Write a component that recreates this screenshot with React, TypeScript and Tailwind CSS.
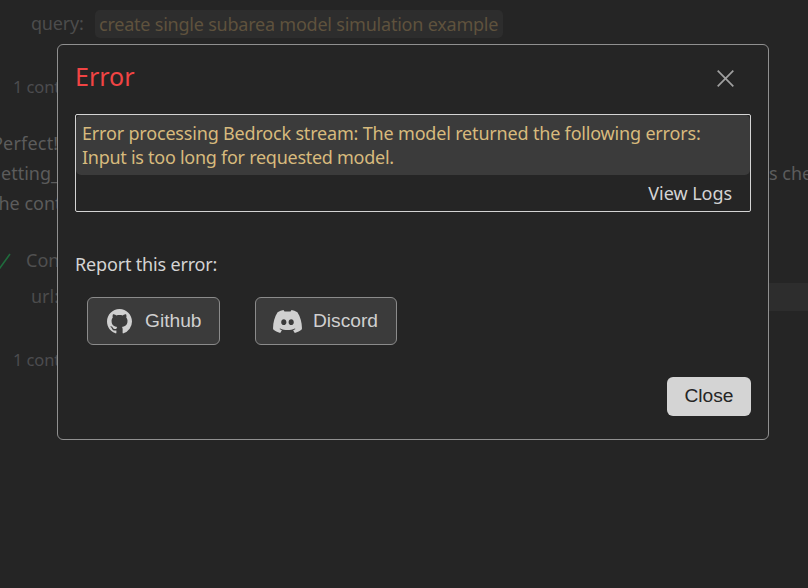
import React from "react";

function Transcript() {
  return (
    <div className="h-full overflow-hidden whitespace-nowrap text-[18px] text-[#5c5c5c]">
      <div className="flex h-[28px] mt-[10px] pl-[31px] text-[#4c4c4c]">
        <span className="w-[64px] leading-[26px] tracking-[-0.2px]">query:</span>
        <span className="h-[28px] w-[408px] rounded-[5px] bg-[#2d2d2d] pl-[4px] leading-[29px] tracking-[-0.22px] text-[#5f523d]">
          create single subarea model simulation example
        </span>
      </div>
      <div className="mt-[35px] h-[28px] pl-[13px] text-[16.5px] leading-[28px] tracking-[-0.1px] text-[#4c4c4f]">1 cont</div>
      <div className="mt-[27px] flex h-[90px] justify-between leading-[30px]">
        <div>
          <div className="-ml-[8px] tracking-[0.2px]">Perfect!</div>
          <div className="pl-[1px]">etting_</div>
          <div className="-ml-[8px]">the cont</div>
        </div>
        <div className="w-[39px] pt-[30px]">s che</div>
      </div>
      <div className="mt-[28px] flex h-[30px] leading-[29px] text-[#505050]">
        <svg className="mt-[7px] h-[18px] w-[26px]" viewBox="0 0 26 18" fill="none" stroke="#1f6b3c" strokeWidth="1.6">
          <path d="M-4 10 L0 15 L10 1" />
        </svg>
        <span>Con</span>
      </div>
      <div className="mt-[7px] flex h-[28px] pl-[31px] leading-[26px] text-[#4c4c4c]">
        <span className="w-[64px]">url:</span>
        <span className="h-[28px] flex-1 bg-[#2d2d2d]" />
      </div>
      <div className="mt-[35px] h-[28px] pl-[13px] text-[16.5px] leading-[28px] tracking-[-0.1px] text-[#4c4c4f]">1 cont</div>
    </div>
  );
}

function GithubIcon({ className }: { className: string }) {
  return (
    <svg viewBox="0 0 16 16" className={className} fill="currentColor">
      <path d="M8 0C3.58 0 0 3.58 0 8c0 3.54 2.29 6.53 5.47 7.59.4.07.55-.17.55-.38 0-.19-.01-.82-.01-1.49-2.01.37-2.53-.49-2.69-.94-.09-.23-.48-.94-.82-1.13-.28-.15-.68-.52-.01-.53.63-.01 1.08.58 1.23.82.72 1.21 1.87.87 2.33.66.07-.52.28-.87.51-1.07-1.78-.2-3.64-.89-3.64-3.95 0-.87.31-1.59.82-2.15-.08-.2-.36-1.02.08-2.12 0 0 .67-.21 2.2.82.64-.18 1.32-.27 2-.27s1.36.09 2 .27c1.53-1.04 2.2-.82 2.2-.82.44 1.1.16 1.92.08 2.12.51.56.82 1.27.82 2.15 0 3.07-1.87 3.75-3.65 3.95.29.25.54.73.54 1.48 0 1.07-.01 1.93-.01 2.2 0 .21.15.46.55.38A8.01 8.01 0 0 0 16 8c0-4.42-3.58-8-8-8z" />
    </svg>
  );
}

function DiscordIcon({ className }: { className: string }) {
  return (
    <svg viewBox="0 0 29 23" className={className} fill="currentColor">
      <path
        fillRule="evenodd"
        d="M4.6 2.2C6.6 1 8.6.3 10.5 0l1 1.6c2-.3 4-.3 6 0l1-1.6c1.9.3 3.9 1 5.9 2.2C27.6 7.3 29.2 13 28.9 19.3c-1.900 1.600-4.300 2.900-7.100 3.700l-1.700-2.700 2.400-1.300-.6-.5c-4.700 2-10.100 2-14.800 0l-.6.5 2.400 1.300L7.200 23C4.400 22.200 2 20.900.1 19.300-.2 13 1.400 7.300 4.600 2.200ZM10.800 9.300c-1.500 0-2.600 1.300-2.600 2.900s1.100 2.900 2.600 2.900 2.600-1.300 2.600-2.900-1.100-2.900-2.600-2.900Zm7.400 0c-1.500 0-2.600 1.300-2.600 2.900s1.100 2.900 2.600 2.900 2.600-1.300 2.600-2.900-1.100-2.900-2.600-2.900Z"
      />
    </svg>
  );
}

function ReportButton({ icon, label, className }: { icon: React.ReactNode; label: string; className: string }) {
  return (
    <button
      className={`flex h-[48px] items-center rounded-[6px] border border-[#8b8b8b] bg-[#3b3b3b] font-['Liberation_Sans',sans-serif] text-[19.2px] text-[#d0d0d0] ${className}`}
    >
      {icon}
      <span>{label}</span>
    </button>
  );
}

function ErrorDialog() {
  return (
    <section
      role="dialog"
      className="absolute left-[57px] top-[44px] flex h-[396px] w-[712px] flex-col rounded-[6px] border border-[#909090] bg-[#252525] px-[17px] text-[18px] text-[#d4d4d4]"
    >
      <header className="flex h-[69px] justify-between">
        <h1 className="pt-[14px] text-[25px] leading-[35px] text-[#f14444]">Error</h1>
        <button aria-label="Dismiss" className="mr-[17px] mt-[25px] h-[17px] w-[17px]">
          <svg viewBox="0 0 17 17" className="h-[17px] w-[17px]" stroke="#a0a0a0" strokeWidth="1.7">
            <path d="M.7.7l15.6 15.6M16.3.7L.7 16.3" />
          </svg>
        </button>
      </header>
      <div className="h-[98px] w-[676px] rounded-[2px] border border-[#d4d4d4]">
        <div className="h-[60px] rounded-[5px] bg-[#3b3b3b] px-[6px] pt-[6px] leading-[24px] text-[#d7ba7d]">
          <p className="tracking-[-0.18px]">Error processing Bedrock stream: The model returned the following errors:</p>
          <p className="tracking-[-0.27px]">Input is too long for requested model.</p>
        </div>
        <div className="flex h-[36px] justify-end pr-[18px] leading-[37px] tracking-[-0.05px]">View Logs</div>
      </div>
      <p className="mt-[38px] h-[28px] leading-[28px] tracking-[-0.17px]">Report this error:</p>
      <div className="mt-[19px] flex gap-[35px] pl-[12px]">
        <ReportButton className="w-[133px] pl-[19px]" label="Github" icon={<GithubIcon className="mr-[13px] h-[25px] w-[25px]" />} />
        <ReportButton className="w-[142px] pl-[17px]" label="Discord" icon={<DiscordIcon className="mr-[11px] h-[23px] w-[29px]" />} />
      </div>
      <button className="mt-[32px] h-[39px] w-[84px] self-end rounded-[6px] bg-[#d4d4d4] pb-[1px] font-['Liberation_Sans',sans-serif] text-[19.2px] leading-[36px] text-[#252525]">
        Close
      </button>
    </section>
  );
}

export default function App() {
  return (
    <main className="relative flex h-[588px] w-[808px] flex-col overflow-hidden bg-[#252525] font-['Noto_Sans',sans-serif]">
      <Transcript />
      <ErrorDialog />
    </main>
  );
}
